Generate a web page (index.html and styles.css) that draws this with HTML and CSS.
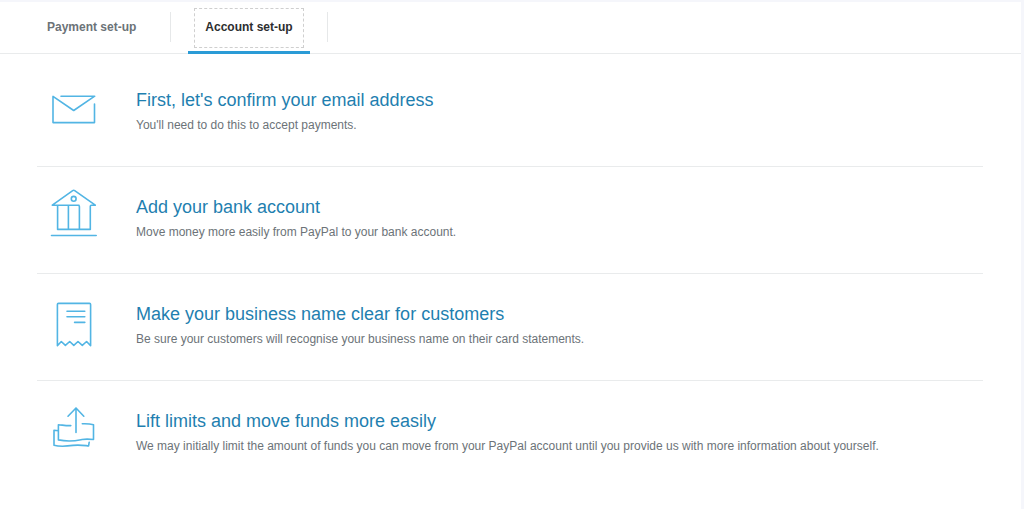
FILE: index.html
```html
<!DOCTYPE html>
<html lang="en">
<head>
<meta charset="utf-8">
<title>Account set-up</title>
<link rel="stylesheet" href="styles.css">
</head>
<body>
<main class="panel">
  <nav class="tabs" aria-label="Set-up">
    <div class="tab"><button class="tab-button" type="button">Payment set-up</button></div>
    <span class="separator"></span>
    <div class="tab tab-active"><button class="tab-button" type="button" aria-current="page">Account set-up</button></div>
    <span class="separator"></span>
  </nav>
  <ul class="steps">
    <li class="step">
      <svg class="icon" viewBox="0 0 56 56" aria-hidden="true"><path d="M15 16.2H48.7L27.7 30.5 7 16.4V42.6H48.5V24"/></svg>
      <div class="text">
        <a class="title" href="#">First, let's confirm your email address</a>
        <p class="desc">You'll need to do this to accept payments.</p>
      </div>
    </li>
    <li class="step">
      <svg class="icon" viewBox="0 0 56 56" aria-hidden="true"><path d="M33 18.2H6.3L26.7 3.6Q27.7 2.9 28.7 3.6L49.3 18.2H45.3Q44.3 18.2 44.3 19.2V42.4H11.6V18.2M22.4 18.2V42.4M32 18.2Q33.4 18.2 33.4 19.6V42.4M5.5 48.5H50.2"/><circle cx="27.7" cy="11.8" r="2.4"/></svg>
      <div class="text">
        <a class="title" href="#">Add your bank account</a>
        <p class="desc">Move money more easily from PayPal to your bank account.</p>
      </div>
    </li>
    <li class="step">
      <svg class="icon" viewBox="0 0 56 56" aria-hidden="true"><path d="M11.4 51.7V10.5Q11.4 9.4 12.5 9.4H43.5Q44.6 9.4 44.6 10.5V51.7L40.6 47.5 36.3 51.4 32 47.5 27.8 51.4 23.7 47.5 19.4 51.4 15.3 47.5ZM21 17.3H38.8M21 22.8H38.8M28.6 28.4H38.8"/></svg>
      <div class="text">
        <a class="title" href="#">Make your business name clear for customers</a>
        <p class="desc">Be sure your customers will recognise your business name on their card statements.</p>
      </div>
    </li>
    <li class="step">
      <svg class="icon" viewBox="0 0 56 56" aria-hidden="true"><path d="M30 31.4V7M22 15.2L30 7 37.8 15.2M24.8 24.6C20 24.8 17 24.1 12.4 23.7V38.9C24 41.4 30 39.8 36 38.5C40 37.8 44 38.1 47.5 38.5V23.7C44 22.8 41 22.6 36.3 22.8M12.4 29.8L8 29.2V44.3C15 46 21 45.2 27 44.4C33 43.6 37 44.3 42.6 44.9L43.2 41.2"/></svg>
      <div class="text">
        <a class="title" href="#">Lift limits and move funds more easily</a>
        <p class="desc">We may initially limit the amount of funds you can move from your PayPal account until you provide us with more information about yourself.</p>
      </div>
    </li>
  </ul>
</main>
</body>
</html>
```
FILE: styles.css
```css
* {
  box-sizing: border-box;
}

body {
  margin: 0;
  min-height: 100vh;
  display: flex;
  padding: 2px 3px 0 0;
  background: #f5f6fb;
  font-family: "Liberation Sans", Arial, sans-serif;
}

.panel {
  flex: 1;
  background: #fff;
}

.tabs {
  display: flex;
  align-items: stretch;
  gap: 17px;
  height: 52px;
  padding-left: 30px;
  border-bottom: 1px solid #e9ebec;
}

.tab {
  padding: 6px 6px 0;
  margin-bottom: -1px;
  border-bottom: 3px solid transparent;
}

.tab-active {
  border-bottom-color: #2a9bd6;
}

.tab-button {
  height: 40px;
  padding: 0 10px 2px;
  border: 1px dashed transparent;
  background: none;
  color: #6c7378;
  font: bold 12px/20px "Liberation Sans", Arial, sans-serif;
  cursor: pointer;
}

.tab-active .tab-button {
  border-color: #cfcfcf;
  color: #2c2e2f;
}

.separator {
  width: 1px;
  margin: 10px 0 11px;
  background: #e6e8e9;
}

.steps {
  margin: 0;
  padding: 6px 38px 0 37px;
  list-style: none;
}

.step {
  display: flex;
  gap: 34px;
  min-height: 107px;
  padding: 20px 9px;
  border-bottom: 1px solid #e9ebec;
}

.step:last-child {
  border-bottom: 0;
}

.icon {
  flex: none;
  width: 56px;
  height: 56px;
  fill: none;
  stroke: #52b5e4;
  stroke-width: 1.6;
  stroke-linecap: round;
  stroke-linejoin: round;
}

.text {
  padding-top: 8px;
}

.title {
  display: block;
  color: #1f7fb0;
  font-size: 18px;
  line-height: 24px;
  text-decoration: none;
}

.desc {
  margin: 3px 0 0;
  color: #6c7378;
  font-size: 12px;
  line-height: 20px;
}
```
